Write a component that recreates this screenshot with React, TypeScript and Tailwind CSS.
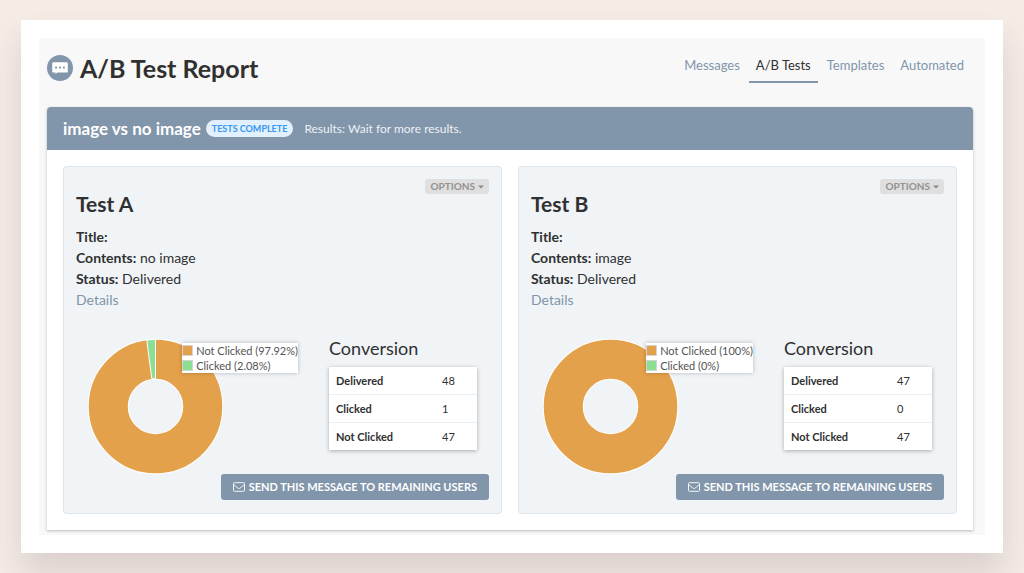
import React from "react";

type Test = {
  name: string;
  contents: string;
  delivered: number;
  clicked: number;
  notClicked: number;
  notClickedShare: string;
  clickedShare: string;
};

const tests: Test[] = [
  {
    name: "Test A",
    contents: "no image",
    delivered: 48,
    clicked: 1,
    notClicked: 47,
    notClickedShare: "97.92%",
    clickedShare: "2.08%",
  },
  {
    name: "Test B",
    contents: "image",
    delivered: 47,
    clicked: 0,
    notClicked: 47,
    notClickedShare: "100%",
    clickedShare: "0%",
  },
];

const tabs = ["Messages", "A/B Tests", "Templates", "Automated"];

function MessageIcon() {
  return (
    <svg viewBox="0 0 26 26" className="size-[26px] shrink-0" aria-hidden="true">
      <circle cx="13" cy="13" r="13" fill="#8195ab" />
      <path
        d="M6.4 7.2h13.2a1.2 1.2 0 0 1 1.2 1.2v8a1.2 1.2 0 0 1-1.2 1.2h-9.4l-1.7 1.7v-1.7H6.4a1.2 1.2 0 0 1-1.2-1.2v-8a1.2 1.2 0 0 1 1.2-1.2z"
        fill="#fff"
      />
      <rect x="8.1" y="11.6" width="1.9" height="1.9" fill="#8195ab" />
      <rect x="12" y="11.6" width="1.9" height="1.9" fill="#8195ab" />
      <rect x="15.9" y="11.6" width="1.9" height="1.9" fill="#8195ab" />
    </svg>
  );
}

function EnvelopeIcon() {
  return (
    <svg
      viewBox="0 0 12 10"
      className="h-[10px] w-3 shrink-0"
      fill="none"
      stroke="#fff"
      strokeWidth="0.9"
      aria-hidden="true"
    >
      <rect x="0.5" y="0.7" width="11" height="8.6" rx="0.9" />
      <path d="M0.7 2.6c1.4 1.3 2.8 2.4 4.1 3.4.8.6 1.6.6 2.4 0 1.3-1 2.7-2.1 4.1-3.4" />
    </svg>
  );
}

function point(radius: number, fraction: number) {
  const angle = fraction * 2 * Math.PI;
  return `${67.5 + radius * Math.sin(angle)} ${67.5 - radius * Math.cos(angle)}`;
}

function Donut({ test }: { test: Test }) {
  const start = test.notClicked / test.delivered;
  return (
    <svg
      viewBox="0 0 135 135"
      className="block size-[135px] overflow-visible"
      role="img"
      aria-label={`${test.name} clicks`}
    >
      <circle cx="67.5" cy="67.5" r="47.25" fill="none" stroke="#fff" strokeWidth="41" />
      <circle cx="67.5" cy="67.5" r="47.25" fill="none" stroke="#e4a14b" strokeWidth="39" />
      {test.clicked > 0 && (
        <path
          d={`M${point(67, start)} A67 67 0 0 1 ${point(67, 0)} L${point(28, 0)} A28 28 0 0 0 ${point(28, start)} Z`}
          fill="#8bdf92"
          stroke="#fff"
          strokeWidth="1"
        />
      )}
    </svg>
  );
}

function TestPanel({ test }: { test: Test }) {
  const rows: [string, number][] = [
    ["Delivered", test.delivered],
    ["Clicked", test.clicked],
    ["Not Clicked", test.notClicked],
  ];
  return (
    <section className="rounded border border-[#dce4ed] bg-[#f0f4f7] px-3 pt-3 pb-[13px]">
      <div className="flex justify-end">
        <button className="flex h-[15px] items-center gap-[3px] rounded-[3px] bg-[#dfdfdf] px-[5px] text-[10px] font-bold text-[#929292]">
          OPTIONS
          <svg viewBox="0 0 6 4" className="h-1 w-1.5" aria-hidden="true">
            <path d="M0 0.5h6L3 3.5z" fill="#8a8a8a" />
          </svg>
        </button>
      </div>
      <h2 className="text-[21px] leading-5 font-bold">{test.name}</h2>
      <div className="mt-3 text-[14px] leading-[21px]">
        <p>
          <strong>Title:</strong>
        </p>
        <p>
          <strong>Contents:</strong> {test.contents}
        </p>
        <p>
          <strong>Status:</strong> Delivered
        </p>
        <a href="#details" className="text-[#8195ab]">
          Details
        </a>
      </div>
      <div className="mt-[29px] flex items-start justify-between px-3">
        <div className="relative w-[210px]">
          <Donut test={test} />
          <ul className="absolute top-1 right-0 bg-white text-[11px] leading-[15px] whitespace-nowrap text-[#545454] shadow-[0_0_4px_rgba(0,0,0,0.25)]">
            <li className="flex items-center gap-[3px]">
              <span className="size-[11px] border border-[#d5d5d5] bg-[#e4a14b]" />
              Not Clicked ({test.notClickedShare})
            </li>
            <li className="flex items-center gap-[3px]">
              <span className="size-[11px] border border-[#d5d5d5] bg-[#8bdf92]" />
              Clicked ({test.clickedShare})
            </li>
          </ul>
        </div>
        <div className="w-[148px]">
          <h3 className="text-[18px] leading-[18px]">Conversion</h3>
          <table className="mt-[10px] w-full bg-white text-left text-[11px] leading-[27px] shadow-[0_1px_4px_rgba(0,0,0,0.3)]">
            <tbody>
              {rows.map(([label, value]) => (
                <tr key={label} className="border-b border-[#e9eff4] last:border-b-0">
                  <th scope="row" className="py-0 pr-0 pl-[7px] font-bold">
                    {label}
                  </th>
                  <td className="w-[35px] p-0">{value}</td>
                </tr>
              ))}
            </tbody>
          </table>
        </div>
      </div>
      <div className="flex justify-end">
        <button className="flex h-[26px] items-center gap-1 rounded-[3px] bg-[#8195ab] px-3 text-[11px] font-bold text-white">
          <EnvelopeIcon />
          SEND THIS MESSAGE TO REMAINING USERS
        </button>
      </div>
    </section>
  );
}

export default function App() {
  return (
    <div className="min-h-screen bg-[#f5ece6] px-[21px] py-5 font-['Lato',sans-serif] text-[#303030]">
      <main className="bg-white p-[18px] shadow-[0_20px_30px_rgba(80,65,75,0.16)]">
        <div className="bg-[#f8f8f8] pt-4 pr-3 pb-[5px] pl-2">
          <header className="flex items-start justify-between">
            <div className="flex items-center gap-[7px]">
              <MessageIcon />
              <h1 className="text-[25px] leading-7 font-bold">A/B Test Report</h1>
            </div>
            <nav className="flex gap-0.5 pr-0.5 text-[13px] leading-[22px]">
              {tabs.map((tab) => (
                <a
                  key={tab}
                  href="#"
                  className={
                    tab === "A/B Tests"
                      ? "border-b-2 border-[#8195ab] px-[7px] pb-[5px] text-[#303030]"
                      : "px-[7px] text-[#8195ab]"
                  }
                >
                  {tab}
                </a>
              ))}
            </nav>
          </header>
          <div className="mt-6 rounded-t bg-white shadow-[0_1px_3px_rgba(0,0,0,0.25)]">
            <div className="flex h-[43px] items-center rounded-t bg-[#8195ab] px-4 text-white">
              <h2 className="text-[17px] leading-5 font-bold">image vs no image</h2>
              <span className="ml-[5px] rounded-full bg-[#e2effd] px-1.5 text-[9px] leading-[17px] font-bold text-[#3498f2]">
                TESTS COMPLETE
              </span>
              <p className="ml-[11px] text-[12px] text-[#edf1f5]">Results: Wait for more results.</p>
            </div>
            <div className="grid grid-cols-2 gap-4 p-4">
              {tests.map((test) => (
                <TestPanel key={test.name} test={test} />
              ))}
            </div>
          </div>
        </div>
      </main>
    </div>
  );
}
